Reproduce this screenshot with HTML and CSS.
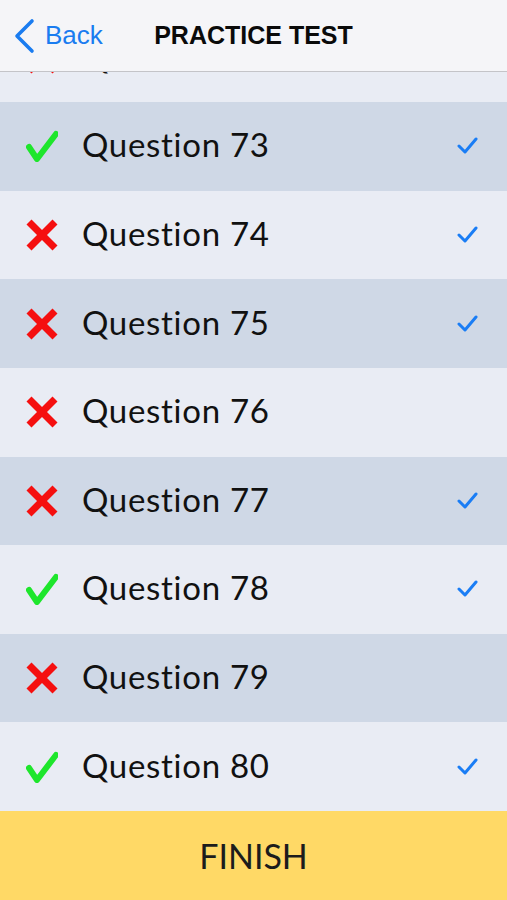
FILE: index.html
```html
<!DOCTYPE html>
<html lang="en">
<head>
  <meta charset="UTF-8" />
  <meta name="viewport" content="width=device-width, initial-scale=1" />
  <title>Practice Test</title>
  <link rel="stylesheet" href="styles.css">
</head>
<body>
  <div class="screen">
    <header class="nav">
      <a class="back" href="#">
        <svg class="chevron" viewBox="0 0 24 36" width="24" height="36">
          <polyline points="20,3 5,18 20,33" />
        </svg>
        <span>Back</span>
      </a>
      <h1 class="title">PRACTICE TEST</h1>
      <div></div>
    </header>

    <div class="list-wrap">
      <ul class="list" id="questionList"></ul>
    </div>

    <button class="finish">FINISH</button>
  </div>

  <script>
    // question number, answered correctly?, marked as answered
    const questions = [
      [72, false, true],
      [73, true, true],
      [74, false, true],
      [75, false, true],
      [76, false, false],
      [77, false, true],
      [78, true, true],
      [79, false, false],
      [80, true, true]
    ];

    const rightIcon = `<svg class="mark" viewBox="0 0 32 32" width="32" height="32">
      <polyline class="right" points="3,17 11,29 30,4" /></svg>`;
    const wrongIcon = `<svg class="mark" viewBox="0 0 32 32" width="32" height="32">
      <line class="wrong" x1="3" y1="3" x2="29" y2="29" />
      <line class="wrong" x1="29" y1="3" x2="3" y2="29" /></svg>`;
    const doneIcon = `<svg class="done" viewBox="0 0 22 18" width="22" height="18">
      <polyline points="2,9 8,15 19,2" /></svg>`;

    const list = document.getElementById('questionList');
    questions.forEach(([num, right, done], index) => {
      const row = document.createElement('li');
      row.className = index % 2 === 1 ? 'row dark' : 'row';
      row.innerHTML = `
        ${right ? rightIcon : wrongIcon}
        <span class="label">Question ${num}</span>
        ${done ? doneIcon : ''}
      `;
      list.appendChild(row);
    });
  </script>
</body>
</html>
```

FILE: styles.css
```css
body {
  margin: 0;
  font-family: 'Liberation Sans', Arial, sans-serif;
  background-color: #e9ecf4;
}

.screen {
  width: 507px;
  height: 900px;
  display: flex;
  flex-direction: column;
  overflow: hidden;
}

.nav {
  position: relative;
  z-index: 1;
  height: 71px;
  flex-shrink: 0;
  display: grid;
  grid-template-columns: 1fr auto 1fr;
  align-items: center;
  background-color: #f5f5f8;
  border-bottom: 1px solid #c4c4c8;
}

.back {
  display: flex;
  align-items: center;
  gap: 9px;
  padding-left: 12px;
  color: #1a7cf0;
  text-decoration: none;
  font-size: 26px;
}

.chevron polyline {
  fill: none;
  stroke: #1a7cf0;
  stroke-width: 3.6;
  stroke-linecap: round;
  stroke-linejoin: round;
}

.title {
  margin: 0;
  font-size: 25px;
  font-weight: bold;
  color: #0a0a0a;
}

.list-wrap {
  flex: 1;
  overflow: hidden;
}

.list {
  list-style: none;
  margin: -58.6px 0 0;
  padding: 0;
}

.row {
  height: 88.625px;
  display: flex;
  align-items: center;
  padding: 0 28px 0 26px;
  background-color: #e9ecf4;
}

.row.dark {
  background-color: #cfd8e6;
}

.mark {
  flex-shrink: 0;
}

.right {
  fill: none;
  stroke: #1ee62c;
  stroke-width: 6;
  stroke-linecap: round;
  stroke-linejoin: round;
}

.wrong {
  stroke: #f50f0f;
  stroke-width: 7;
}

.label {
  flex: 1;
  margin-left: 24px;
  padding-bottom: 4px;
  font-family: 'Lato', sans-serif;
  font-size: 33px;
  letter-spacing: 0.7px;
  color: #111;
}

.done polyline {
  fill: none;
  stroke: #1a7df5;
  stroke-width: 3;
  stroke-linecap: round;
  stroke-linejoin: round;
}

.finish {
  height: 89px;
  flex-shrink: 0;
  border: none;
  background-color: #ffd966;
  font-family: 'Lato', sans-serif;
  font-size: 34px;
  color: #1c1c1c;
  cursor: pointer;
}
```
